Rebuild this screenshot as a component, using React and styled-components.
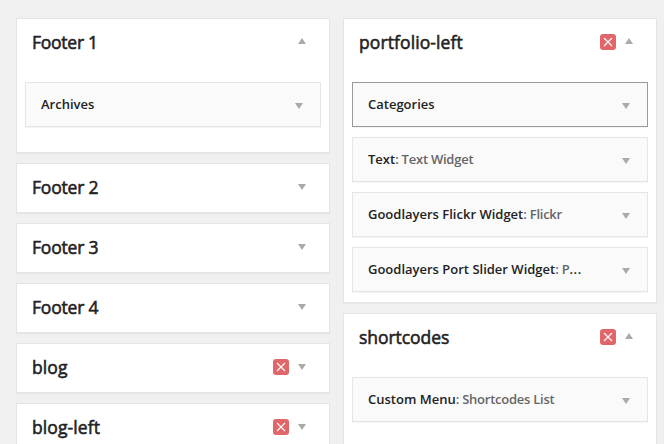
import React from 'react';
import styled, { createGlobalStyle } from 'styled-components';

const GlobalStyle = createGlobalStyle`
  * { box-sizing: border-box; }
  html, body { margin: 0; height: 444px; overflow: hidden; background: #f0f0f0; }
  body { font-family: "Open Sans", sans-serif; color: #222; }
`;

const Page = styled.main`
  display: grid;
  grid-template-columns: 314px 314px;
  column-gap: 13px;
  align-items: start;
  height: 444px;
  padding: 18px 7px 0 16px;
  overflow: hidden;
`;

const Column = styled.div`
  display: flex;
  flex-direction: column;
  gap: 10px;
`;

const Sidebar = styled.section`
  height: ${(p) => p.$height}px;
  background: #fff;
  border: 1px solid #e5e5e5;
  box-shadow: 0 1px 1px rgba(0, 0, 0, 0.04);
`;

const SidebarHeader = styled.header`
  display: flex;
  align-items: center;
  height: 46px;
  margin-bottom: 2px;
  padding: 0 23px 0 15px;
`;

const SidebarTitle = styled.h3`
  flex: 1;
  margin: 0;
  font-size: 17.5px;
  line-height: 24px;
  font-weight: 400;
  -webkit-text-stroke: 0.55px #222;
  letter-spacing: ${(p) => p.$tracking}px;
`;

const RemoveButton = styled.button`
  display: flex;
  width: 16px;
  height: 16px;
  margin-right: 9px;
  padding: 0;
  border: 0;
  border-radius: 3px;
  background: #e0666a;
`;

const Widgets = styled.div`
  display: flex;
  flex-direction: column;
  gap: 10px;
  padding: 15px 8px 0;
`;

const WidgetBar = styled.article`
  display: flex;
  align-items: center;
  height: 45px;
  padding: 0 17px 0 15px;
  background: #fafafa;
  border: 1px solid ${(p) => (p.$active ? '#999' : '#e5e5e5')};
  box-shadow: 0 1px 1px rgba(0, 0, 0, 0.04);
`;

const WidgetTitle = styled.h4`
  flex: 1;
  margin: 0;
  padding-bottom: 2px;
  font-size: 13px;
  line-height: 18px;
  font-weight: 600;
  white-space: nowrap;
`;

const Detail = styled.span`
  color: #666;
  letter-spacing: -0.24px;
`;

const Ellipsis = styled.span`
  letter-spacing: 0.6px;
`;

const ArrowIcon = styled.svg`
  display: block;
  width: 8px;
  height: 6px;
  margin-top: ${(p) => (p.$inWidget ? 3 : 0)}px;
  margin-bottom: ${(p) => (p.$up ? 2 : 0)}px;
  fill: #aaa;
`;

function Arrow({ up, inWidget }) {
  return (
    <ArrowIcon viewBox="0 0 8 6" $inWidget={inWidget} $up={up}>
      <path d={up ? 'M0 6 4 0 8 6Z' : 'M0 0H8L4 6Z'} />
    </ArrowIcon>
  );
}

function Area({ title, tracking = 0.1, height, open, removable, widgets = [] }) {
  return (
    <Sidebar $height={height}>
      <SidebarHeader>
        <SidebarTitle $tracking={tracking}>{title}</SidebarTitle>
        {removable && (
          <RemoveButton aria-label="Remove">
            <svg width="16" height="16" viewBox="0 0 16 16">
              <path d="M4 4l8 8M12 4l-8 8" stroke="#fff" strokeWidth="1.1" />
            </svg>
          </RemoveButton>
        )}
        <Arrow up={open} />
      </SidebarHeader>
      {open && (
        <Widgets>
          {widgets.map((w) => (
            <WidgetBar key={w.name} $active={w.active}>
              <WidgetTitle>
                {w.name}
                {w.detail && <Detail>: {w.detail}</Detail>}
                {w.truncated && <Ellipsis>...</Ellipsis>}
              </WidgetTitle>
              <Arrow inWidget />
            </WidgetBar>
          ))}
        </Widgets>
      )}
    </Sidebar>
  );
}

export default function App() {
  return (
    <>
      <GlobalStyle />
      <Page>
        <Column>
          <Area title="Footer 1" tracking={-0.25} height={135} open widgets={[{ name: 'Archives' }]} />
          <Area title="Footer 2" tracking={-0.2} height={50} />
          <Area title="Footer 3" tracking={-0.2} height={50} />
          <Area title="Footer 4" tracking={-0.2} height={50} />
          <Area title="blog" height={50} removable />
          <Area title="blog-left" height={50} removable />
        </Column>
        <Column>
          <Area
            title="portfolio-left"
            height={285}
            open
            removable
            widgets={[
              { name: 'Categories', active: true },
              { name: 'Text', detail: 'Text Widget' },
              { name: 'Goodlayers Flickr Widget', detail: 'Flickr' },
              { name: 'Goodlayers Port Slider Widget', detail: 'P', truncated: true },
            ]}
          />
          <Area
            title="shortcodes"
            tracking={-0.05}
            height={160}
            open
            removable
            widgets={[{ name: 'Custom Menu', detail: 'Shortcodes List' }]}
          />
        </Column>
      </Page>
    </>
  );
}
